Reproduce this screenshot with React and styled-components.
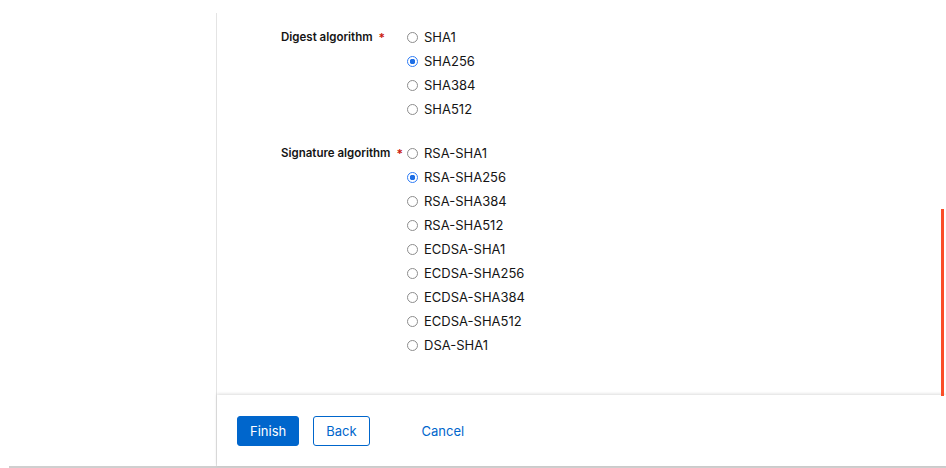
import styled, { createGlobalStyle } from "styled-components";

const GlobalStyle = createGlobalStyle`
  html, body {
    margin: 0;
    padding: 0;
    background: #ffffff;
  }
  body {
    font-family: Inter, "Noto Sans", "Liberation Sans", sans-serif;
    color: #151515;
  }
`;

const digestOptions = ["SHA1", "SHA256", "SHA384", "SHA512"];
const signatureOptions = [
  "RSA-SHA1",
  "RSA-SHA256",
  "RSA-SHA384",
  "RSA-SHA512",
  "ECDSA-SHA1",
  "ECDSA-SHA256",
  "ECDSA-SHA384",
  "ECDSA-SHA512",
  "DSA-SHA1",
];

const Frame = styled.div`
  display: flex;
  height: 468px;
  margin-left: 9px;
  padding-top: 13px;
  box-sizing: border-box;
  border-bottom: 2px solid #cfcfcf;
`;

const Sidebar = styled.aside`
  width: 207px;
  flex-shrink: 0;
  border-right: 1px solid #e4e4e4;
`;

const Main = styled.main`
  flex: 1;
  display: flex;
  flex-direction: column;
  min-width: 0;
`;

const ScrollArea = styled.div`
  position: relative;
  flex: 1;
  padding: 12px 0 0 64px;
`;

const ScrollThumb = styled.div`
  position: absolute;
  top: 196px;
  right: 2px;
  width: 3px;
  height: 187px;
  background: #fa4d28;
`;

const Field = styled.div`
  display: grid;
  grid-template-columns: 126px 1fr;
  margin-bottom: 20px;
`;

const Label = styled.div`
  display: flex;
  align-items: center;
  height: 24px;
  font-size: 11.5px;
  font-weight: 600;
  white-space: nowrap;
`;

const Required = styled.span`
  color: #c9190b;
  margin-left: 6px;
  font-size: 12px;
`;

const Options = styled.div`
  display: flex;
  flex-direction: column;
`;

const Option = styled.label`
  display: flex;
  align-items: center;
  height: 24px;
  font-size: 13px;
  gap: 6px;
`;

const Dot = styled.span`
  width: 11px;
  height: 11px;
  box-sizing: border-box;
  border-radius: 50%;
  border: 1px solid ${(p) => (p.$checked ? "#2f7df6" : "#8d8d8d")};
  background: ${(p) =>
    p.$checked
      ? "radial-gradient(circle, #1f6fe5 0 2.6px, #ffffff 3px)"
      : "#ffffff"};
`;

const Footer = styled.footer`
  display: flex;
  align-items: center;
  height: 71px;
  padding: 1px 20px 0;
  box-sizing: border-box;
  box-shadow: 0 -1px 3px rgba(0, 0, 0, 0.14);
  gap: 14px;
`;

const Button = styled.button`
  height: 30px;
  padding: 0 ${(p) => (p.$variant === "link" ? "16px" : "12px")};
  border-radius: 3px;
  font-family: inherit;
  font-size: 13px;
  cursor: pointer;
  border: 1px solid
    ${(p) => (p.$variant === "link" ? "transparent" : "#0066cc")};
  background: ${(p) => (p.$variant === "primary" ? "#0066cc" : "#ffffff")};
  color: ${(p) => (p.$variant === "primary" ? "#ffffff" : "#0066cc")};
  margin-left: ${(p) => (p.$variant === "link" ? "21px" : "0")};
`;

const RadioGroup = ({ label, options, value }) => (
  <Field>
    <Label>
      {label}
      <Required>*</Required>
    </Label>
    <Options>
      {options.map((opt) => (
        <Option key={opt}>
          <Dot $checked={opt === value} />
          {opt}
        </Option>
      ))}
    </Options>
  </Field>
);

export default function App() {
  return (
    <>
      <GlobalStyle />
      <Frame>
        <Sidebar />
        <Main>
          <ScrollArea>
            <RadioGroup
              label="Digest algorithm"
              options={digestOptions}
              value="SHA256"
            />
            <RadioGroup
              label="Signature algorithm"
              options={signatureOptions}
              value="RSA-SHA256"
            />
            <ScrollThumb />
          </ScrollArea>
          <Footer>
            <Button $variant="primary">Finish</Button>
            <Button>Back</Button>
            <Button $variant="link">Cancel</Button>
          </Footer>
        </Main>
      </Frame>
    </>
  );
}
